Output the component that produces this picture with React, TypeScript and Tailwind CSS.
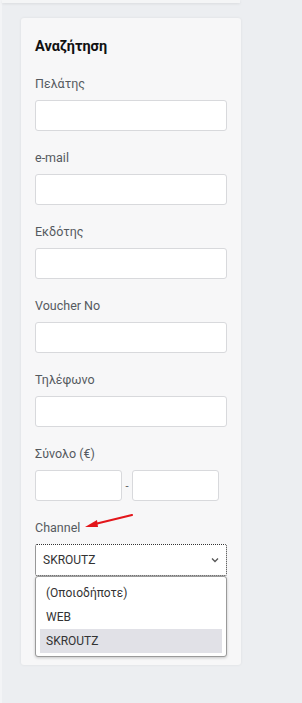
const fields = ["Πελάτης", "e-mail", "Εκδότης", "Voucher No", "Τηλέφωνο"];

function Label({ children }: { children: React.ReactNode }) {
  return <div className="text-[12.5px] leading-[16px] text-[#555a5f] mb-[8px]">{children}</div>;
}

export default function App() {
  return (
    <div className="min-h-[703px] bg-[#eceef1] border-l-2 border-[#f3f4f6]" style={{ fontFamily: "Roboto, 'Noto Sans', sans-serif" }}>
      <div className="h-[3px] w-[238px] bg-[#f4f5f6] shadow-[0_1px_3px_rgba(0,0,0,0.08)]" />
      <div className="relative mt-[15px] ml-[19px] w-[220px] bg-[#f7f7f8] rounded-[3px] shadow-[0_0_3px_rgba(0,0,0,0.07)] pt-[19px] px-[14px] pb-[8px]">
        <h2 className="text-[14.5px] leading-[20px] font-bold text-[#111] mb-[19px]">Αναζήτηση</h2>

        {fields.map((f) => (
          <div key={f} className="mb-[19px]">
            <Label>{f}</Label>
            <div className="h-[31px] bg-white border border-[#d8d9dc] rounded-[3px]" />
          </div>
        ))}

        <div className="mb-[19px]">
          <Label>Σύνολο (€)</Label>
          <div className="flex items-center">
            <div className="w-[87px] h-[31px] bg-white border border-[#d8d9dc] rounded-[3px]" />
            <span className="w-[10px] text-center text-[11px] text-[#555] pt-[4px]">-</span>
            <div className="w-[87px] h-[31px] bg-white border border-[#d8d9dc] rounded-[3px]" />
          </div>
        </div>

        <div>
          <Label>Channel</Label>
          <div className="h-[32px] bg-white border border-dotted border-[#333] rounded-[2px] flex items-center justify-between pl-[7px] pr-[6px]">
            <span className="text-[12px] text-[#333]">SKROUTZ</span>
            <svg width="10" height="10" viewBox="0 0 10 10" fill="none">
              <path d="M2 3.5 L5 6.5 L8 3.5" stroke="#555" strokeWidth="1.3" />
            </svg>
          </div>
          <div className="h-[81px] bg-white border border-[#9a9a9a] rounded-[3px] shadow-[0_1px_3px_rgba(0,0,0,0.2)] p-[4px] text-[12px] text-[#333]">
            <div className="h-[24px] flex items-center pl-[6px]">(Οποιοδήποτε)</div>
            <div className="h-[24px] flex items-center pl-[6px]">WEB</div>
            <div className="h-[24px] flex items-center pl-[6px] bg-[#e1e1e7]">SKROUTZ</div>
          </div>
        </div>

        <svg className="absolute left-[60px] top-[494px]" width="60" height="20" viewBox="0 0 60 20">
          <path d="M51 3 L14 12" stroke="#e3161b" strokeWidth="2.2" strokeLinecap="round" />
          <path d="M4 15 L16 8 L17 15 Z" fill="#e3161b" />
        </svg>
      </div>
    </div>
  );
}
